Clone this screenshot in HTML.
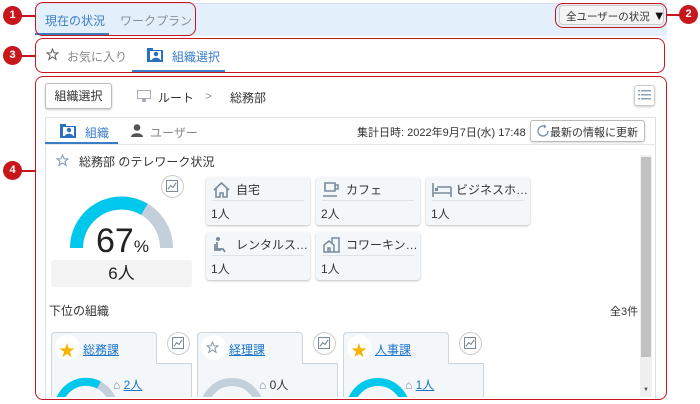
<!DOCTYPE html>
<html><head><meta charset="utf-8"><style>
*{box-sizing:border-box;margin:0;padding:0}
body{width:700px;height:404px;background:#fff;font-family:"Liberation Sans","Noto Sans CJK JP",sans-serif;color:#333;position:relative;overflow:hidden;font-size:11px}
.a{position:absolute;white-space:nowrap}
.red{position:absolute;border:1.5px solid #c8161d;border-radius:8px}
.num{position:absolute;width:19px;height:19px;border-radius:50%;background:#c8161d;color:#fff;font-size:11px;font-weight:bold;text-align:center;line-height:19px}
.ln{position:absolute;height:1.5px;background:#c8161d}
.card{position:absolute;width:104px;height:48px;background:#f4f7fa;border-radius:3px;box-shadow:0 1px 2px rgba(0,0,0,.25)}
.card .h{position:absolute;left:6px;top:4px;right:6px;height:20px;border-bottom:1px solid #dde3e8;font-size:12px;line-height:18px;white-space:nowrap}
.card .h span{position:absolute;left:24px}
.card .c{position:absolute;left:5px;top:28px;font-size:12px}
.chart{position:absolute;width:23px;height:23px;border-radius:50%;border:1px solid #ccc;background:#fff}
.sub{position:absolute;top:332px}
.lnk{color:#1a73c8;text-decoration:underline;font-size:12px}
</style></head><body>
<svg width="0" height="0" style="position:absolute"><defs><symbol id="ch" viewBox="0 0 23 23"><rect x="5" y="5" width="12" height="12" fill="none" stroke="#6b7d8e" stroke-width="1"/><path d="M6.5 14.5l3-4 2.5 2 3.5-5" fill="none" stroke="#6b7d8e" stroke-width="1.1"/></symbol></defs></svg>
<!-- top bar -->
<div class="a" style="left:35px;top:3px;width:632px;height:33px;background:#e3f0fb;border-top:1px solid #dde"></div>
<div class="a" style="left:45px;top:12px;font-size:12px;color:#3a7dc7">現在の状況</div>
<div class="a" style="left:35px;top:33px;width:74px;height:2px;background:#3a7dc7"></div>
<div class="a" style="left:120px;top:12px;font-size:12px;color:#8a8f94">ワークプラン</div>
<div class="a" style="left:559px;top:5px;width:105px;height:20px;background:#f4f4f4;border-radius:4px;border:1px solid #ccc"></div>
<div class="a" style="left:566px;top:8px;font-size:10.5px;color:#333">全ユーザーの状況 <span style="font-size:13px;color:#111">▼</span></div>
<div class="red" style="left:35px;top:2px;width:161px;height:34px"></div>
<div class="red" style="left:555px;top:3px;width:112px;height:25px"></div>
<div class="num" style="left:3px;top:6px">1</div><div class="ln" style="left:21px;top:15px;width:14px"></div>
<div class="num" style="left:679px;top:5px">2</div><div class="ln" style="left:667px;top:14px;width:13px"></div>
<!-- second bar -->
<div class="red" style="left:35px;top:38px;width:630px;height:35px"></div>
<svg class="a" style="left:46px;top:48px" width="13" height="13" viewBox="0 0 24 24"><path d="M12 2l3 7h7l-5.5 4.5 2 7.5-6.5-4.5-6.5 4.5 2-7.5L2 9h7z" fill="none" stroke="#666" stroke-width="2"/></svg>
<div class="a" style="left:67px;top:48px;font-size:12px;color:#888">お気に入り</div>
<svg class="a" style="left:147px;top:47px" width="16" height="15" viewBox="0 0 16 15"><path d="M0 1h6v2h10v12H0z" fill="#2a6fc0"/><rect x="3" y="4" width="11" height="9" fill="#fff"/><circle cx="9" cy="7" r="2.2" fill="#2a6fc0"/><path d="M5 13c0-3 8-3 8 0z" fill="#2a6fc0"/></svg>
<div class="a" style="left:172px;top:48px;font-size:12px;color:#3a7dc7">組織選択</div>
<div class="a" style="left:132px;top:70px;width:93px;height:2px;background:#3a7dc7"></div>
<div class="num" style="left:3px;top:46px">3</div><div class="ln" style="left:21px;top:55px;width:14px"></div>
<!-- main -->
<div class="num" style="left:3px;top:161px">4</div><div class="ln" style="left:21px;top:170px;width:14px"></div>
<div class="a" style="left:45px;top:83px;width:67px;height:26px;border:1px solid #bbb;border-radius:3px;box-shadow:0 1px 2px rgba(0,0,0,.2);font-size:12px;text-align:center;line-height:24px">組織選択</div>
<svg class="a" style="left:137px;top:90px" width="14" height="12" viewBox="0 0 14 12"><rect x="0.5" y="0.5" width="13" height="8" fill="none" stroke="#aab"/><rect x="5" y="9" width="4" height="3" fill="#aab"/></svg>
<div class="a" style="left:158px;top:89px;font-size:12px">ルート</div>
<div class="a" style="left:205px;top:89px;font-size:12px;color:#999">&gt;</div>
<div class="a" style="left:230px;top:89px;font-size:12px">総務部</div>
<div class="a" style="left:634px;top:85px;width:21px;height:21px;border:1px solid #ccc;border-radius:3px;box-shadow:0 1px 2px rgba(0,0,0,.2)"></div>
<svg class="a" style="left:638px;top:89px" width="13" height="13" viewBox="0 0 13 13"><g fill="#8ea0b2"><rect x="0" y="1" width="2" height="1.5"/><rect x="3" y="1" width="10" height="1.5"/><rect x="0" y="5" width="2" height="1.5"/><rect x="3" y="5" width="10" height="1.5"/><rect x="0" y="9" width="2" height="1.5"/><rect x="3" y="9" width="10" height="1.5"/></g></svg>
<!-- inner panel -->
<div class="a" style="left:45px;top:117px;width:611px;height:283px;border:1px solid #e0e0e0"></div>
<svg class="a" style="left:60px;top:123px" width="16" height="15" viewBox="0 0 16 15"><path d="M0 1h6v2h10v12H0z" fill="#2a6fc0"/><rect x="3" y="4" width="11" height="9" fill="#fff"/><circle cx="9" cy="7" r="2.2" fill="#2a6fc0"/><path d="M5 13c0-3 8-3 8 0z" fill="#2a6fc0"/></svg>
<div class="a" style="left:85px;top:124px;font-size:12px;color:#3a7dc7">組織</div>
<div class="a" style="left:45px;top:142px;width:73px;height:2px;background:#3a7dc7"></div>
<div class="a" style="left:45px;top:144px;width:611px;height:1px;background:#e6e6e6"></div>
<svg class="a" style="left:131px;top:124px" width="12" height="13" viewBox="0 0 12 13"><circle cx="6" cy="3.5" r="3.3" fill="#555"/><path d="M0 13c0-5 12-5 12 0z" fill="#555"/></svg>
<div class="a" style="left:150px;top:124px;font-size:12px;color:#888">ユーザー</div>
<div class="a" style="left:357px;top:124px;font-size:11px">集計日時: 2022年9月7日(水) 17:48</div>
<div class="a" style="left:530px;top:120px;width:115px;height:22px;border:1px solid #bbb;border-radius:3px;box-shadow:0 1px 2px rgba(0,0,0,.15)"></div>
<svg class="a" style="left:536px;top:124px" width="14" height="14" viewBox="0 0 14 14"><path d="M12 7A5 5 0 1 1 9 2.4" fill="none" stroke="#7a8ea3" stroke-width="1.3"/><path d="M8 0.5l2.5 2-2.5 2z" fill="#7a8ea3"/></svg>
<div class="a" style="left:550px;top:124px;font-size:11px">最新の情報に更新</div>
<!-- scrollbar -->
<div class="a" style="left:640px;top:155px;width:12px;height:242px;background:#f0f0f0"></div>
<div class="a" style="left:641px;top:157px;width:10px;height:200px;background:#c1c1c1"></div>
<div class="a" style="left:643px;top:387px;font-size:6px;color:#555">▼</div>
<!-- title -->
<svg class="a" style="left:56px;top:154px" width="13" height="13" viewBox="0 0 24 24"><path d="M12 2l3 7h7l-5.5 4.5 2 7.5-6.5-4.5-6.5 4.5 2-7.5L2 9h7z" fill="none" stroke="#8a9bb0" stroke-width="2"/></svg>
<div class="a" style="left:79px;top:153px;font-size:12px">総務部 のテレワーク状況</div>
<svg class="chart" style="left:161px;top:175px"><use href="#ch"/></svg>
<svg class="a" style="left:60px;top:190px" width="124" height="60" viewBox="60 190 124 60"><path d="M76.5 248A45 45 0 0 1 166.5 248" fill="none" stroke="#c3d0dc" stroke-width="13"/><path d="M76.5 248A45 45 0 0 1 144.4 209.3" fill="none" stroke="#00c8ec" stroke-width="13"/></svg>
<div class="a" style="left:96px;top:222px;font-size:34px;color:#222;line-height:38px">67<span style="font-size:17px">%</span></div>
<div class="a" style="left:51px;top:260px;width:141px;height:27px;background:#f3f3f3;border-radius:3px;text-align:center;font-size:17px;line-height:27px;color:#222">6人</div>
<!-- cards -->
<div class="card" style="left:206px;top:177px"><div class="h"><svg class="a" style="left:1px;top:1px" width="17" height="16" viewBox="0 0 17 16"><path d="M1 8L8.5 1 16 8M3 6.5V15h4v-4h3v4h4V6.5" fill="none" stroke="#7a8a9a" stroke-width="1.6"/></svg><span>自宅</span></div><div class="c">1人</div></div>
<div class="card" style="left:316px;top:177px"><div class="h"><svg class="a" style="left:1px;top:1px" width="17" height="16" viewBox="0 0 17 16"><path d="M2 1h10v8H2zM12 3h3v4h-3M0 14h14" fill="none" stroke="#7a8a9a" stroke-width="1.6"/></svg><span>カフェ</span></div><div class="c">2人</div></div>
<div class="card" style="left:426px;top:177px"><div class="h"><svg class="a" style="left:0px;top:2px" width="20" height="14" viewBox="0 0 20 14"><path d="M1 0v14M1 10h18v4M19 4v6M5 4h14" fill="none" stroke="#7a8a9a" stroke-width="1.6"/><rect x="3" y="5" width="3" height="3" fill="#7a8a9a"/></svg><span>ビジネスホ…</span></div><div class="c">1人</div></div>
<div class="card" style="left:206px;top:232px"><div class="h"><svg class="a" style="left:2px;top:1px" width="15" height="16" viewBox="0 0 15 16"><circle cx="4" cy="2" r="2" fill="#7a8a9a"/><path d="M3 5v7h6l2 3M1 7v6h6" fill="none" stroke="#7a8a9a" stroke-width="1.8"/></svg><span>レンタルス…</span></div><div class="c">1人</div></div>
<div class="card" style="left:316px;top:232px"><div class="h"><svg class="a" style="left:1px;top:1px" width="18" height="16" viewBox="0 0 18 16"><path d="M1 15V8l5-4 5 4v7H1zM5 15v-4h2v4M9 6V1h7v14h-5" fill="none" stroke="#7a8a9a" stroke-width="1.5"/></svg><span>コワーキン…</span></div><div class="c">1人</div></div>
<div class="a" style="left:49px;top:302px;font-size:12px">下位の組織</div>
<div class="a" style="left:610px;top:303px;font-size:11px">全3件</div>
<!-- sub org cards -->
<div style="position:absolute;left:0;top:0;width:700px;height:397px;overflow:hidden">
<div class="sub" style="left:51px">
 <div class="a" style="left:0;top:0;width:106px;height:32px;background:#f4f7fa;border:1px solid #cdd5dd;border-bottom:none;border-radius:4px 4px 0 0"></div>
 <div class="a" style="left:0;top:31px;width:141px;height:60px;background:#f4f7fa;border:1px solid #cdd5dd;border-top:none"></div>
 <div class="a" style="left:105px;top:31px;width:36px;height:1px;background:#cdd5dd"></div>
 <div class="a" style="left:4px;top:3px;width:25px;height:25px;border-radius:50%;background:#fff"></div>
 <div class="a" style="left:8px;top:5px;color:#f7b500;font-size:16px">★</div>
 <div class="a lnk" style="left:32px;top:9px">総務課</div>
 <svg class="a" style="left:0;top:40px" width="80" height="40"><circle cx="35" cy="38" r="28" fill="none" stroke="#c3d0dc" stroke-width="8"/><path d="M7 38A28 28 0 0 1 48 13" fill="none" stroke="#00c8ec" stroke-width="8"/></svg>
 <div class="a" style="left:62px;top:44px;color:#7a8a9a;font-size:12px">⌂ <span class="lnk">2人</span></div>
</div>
<svg class="chart" style="left:167px;top:332px"><use href="#ch"/></svg>
<div class="sub" style="left:197px">
 <div class="a" style="left:0;top:0;width:106px;height:32px;background:#f4f7fa;border:1px solid #cdd5dd;border-bottom:none;border-radius:4px 4px 0 0"></div>
 <div class="a" style="left:0;top:31px;width:141px;height:60px;background:#f4f7fa;border:1px solid #cdd5dd;border-top:none"></div>
 <div class="a" style="left:105px;top:31px;width:36px;height:1px;background:#cdd5dd"></div>
 <div class="a" style="left:4px;top:3px;width:25px;height:25px;border-radius:50%;background:#fff"></div>
 <svg class="a" style="left:9px;top:9px" width="13" height="13" viewBox="0 0 24 24"><path d="M12 2l3 7h7l-5.5 4.5 2 7.5-6.5-4.5-6.5 4.5 2-7.5L2 9h7z" fill="none" stroke="#8a9bb0" stroke-width="2"/></svg>
 <div class="a lnk" style="left:32px;top:9px">経理課</div>
 <svg class="a" style="left:0;top:40px" width="80" height="40"><circle cx="35" cy="38" r="28" fill="none" stroke="#c3d0dc" stroke-width="8"/></svg>
 <div class="a" style="left:62px;top:44px;color:#7a8a9a;font-size:12px">⌂ <span style="color:#333">0人</span></div>
</div>
<svg class="chart" style="left:313px;top:332px"><use href="#ch"/></svg>
<div class="sub" style="left:343px">
 <div class="a" style="left:0;top:0;width:106px;height:32px;background:#f4f7fa;border:1px solid #cdd5dd;border-bottom:none;border-radius:4px 4px 0 0"></div>
 <div class="a" style="left:0;top:31px;width:141px;height:60px;background:#f4f7fa;border:1px solid #cdd5dd;border-top:none"></div>
 <div class="a" style="left:105px;top:31px;width:36px;height:1px;background:#cdd5dd"></div>
 <div class="a" style="left:4px;top:3px;width:25px;height:25px;border-radius:50%;background:#fff"></div>
 <div class="a" style="left:8px;top:5px;color:#f7b500;font-size:16px">★</div>
 <div class="a lnk" style="left:32px;top:9px">人事課</div>
 <svg class="a" style="left:0;top:40px" width="80" height="40"><circle cx="35" cy="38" r="28" fill="none" stroke="#00c8ec" stroke-width="8"/></svg>
 <div class="a" style="left:62px;top:44px;color:#7a8a9a;font-size:12px">⌂ <span class="lnk">1人</span></div>
</div>
<svg class="chart" style="left:459px;top:332px"><use href="#ch"/></svg>
</div>
<div class="red" style="left:35px;top:76px;width:632px;height:324px"></div>
</body></html>
